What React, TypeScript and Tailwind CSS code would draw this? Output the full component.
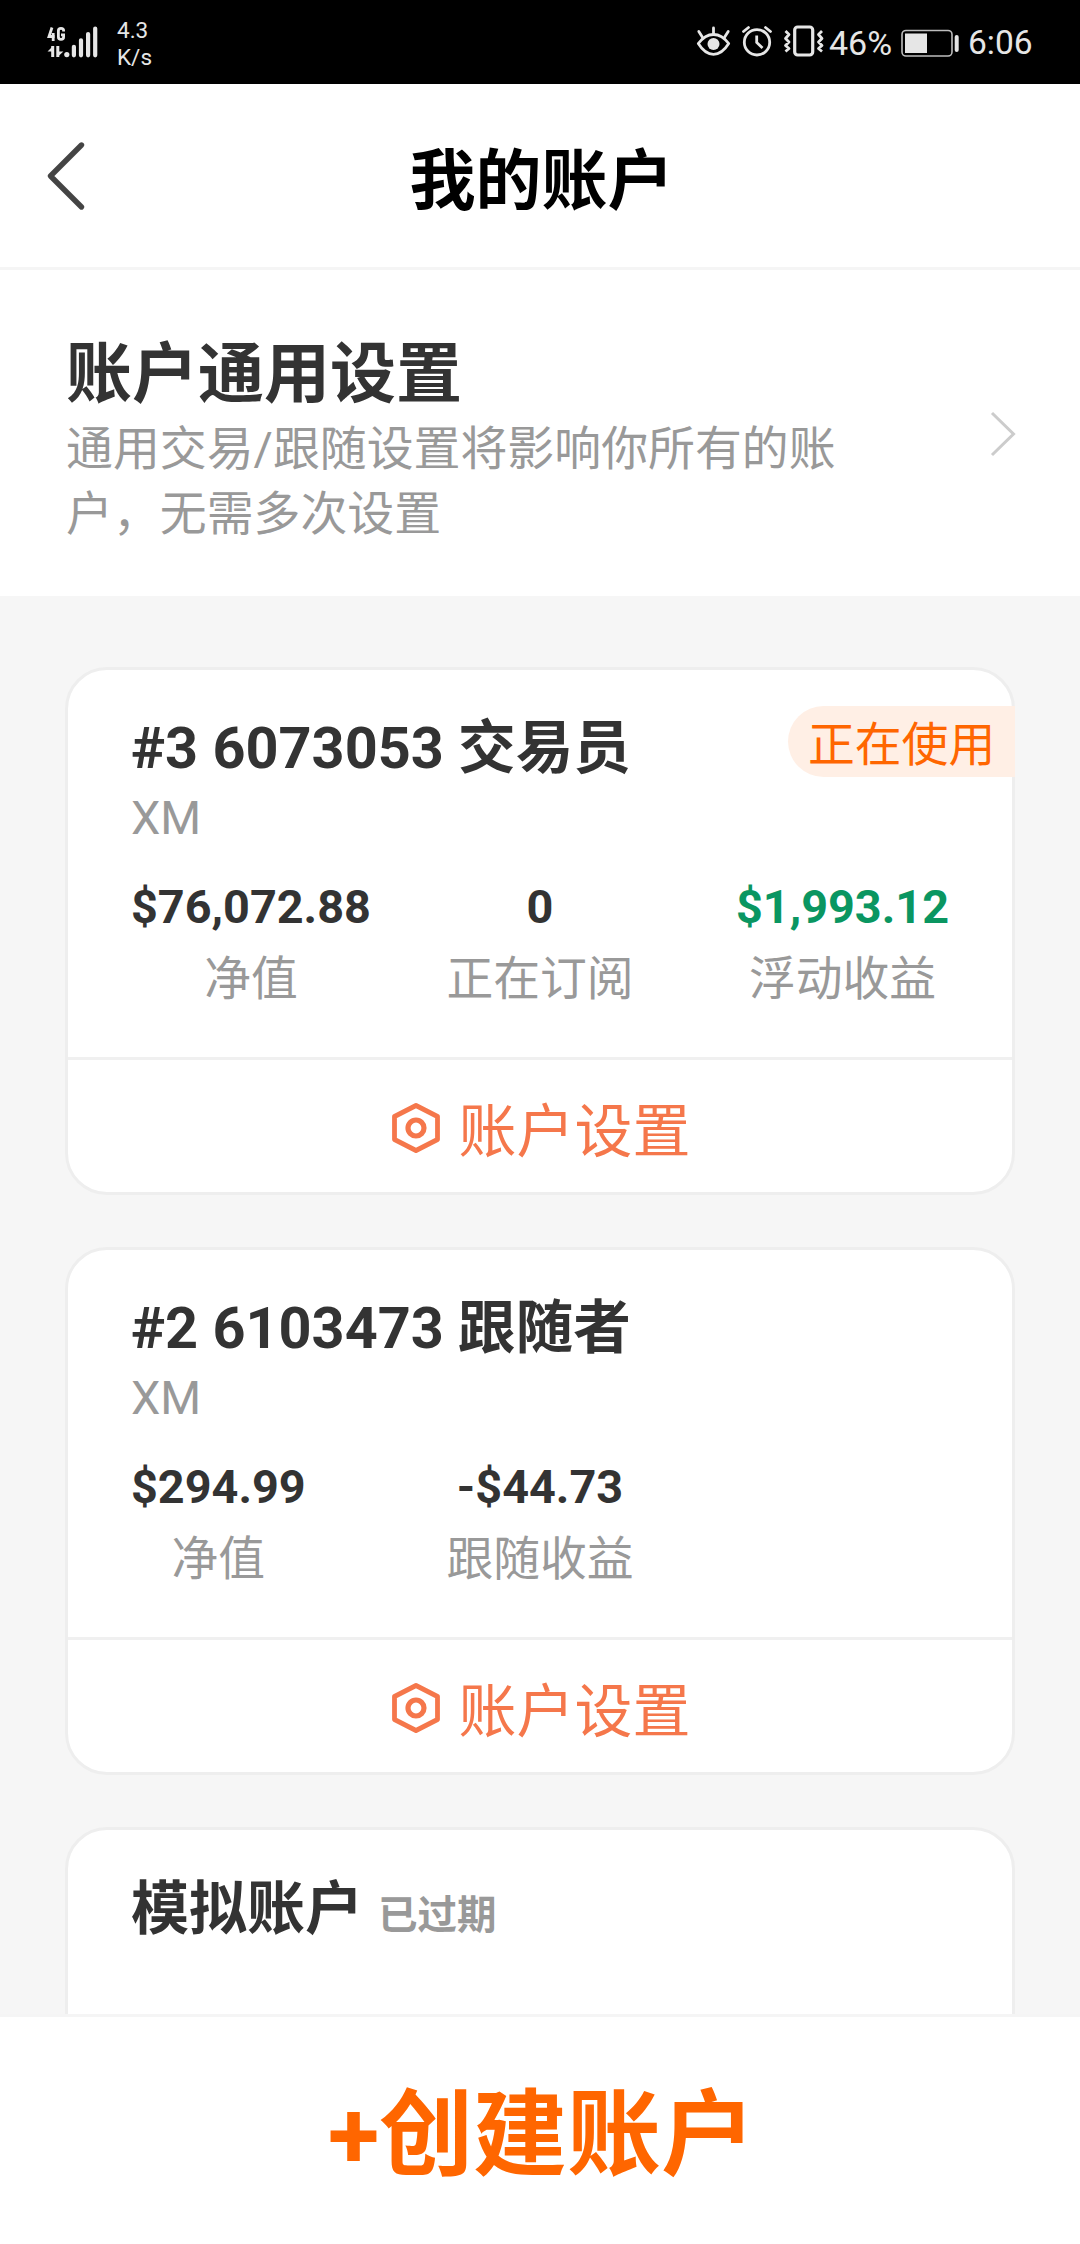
import React from "react";

type Stat = { value: string; label: string; color?: string };

function StatusBar() {
  return (
    <div className="flex h-[84px] shrink-0 items-center bg-black text-[#e6e6e6]">
      <svg className="ml-[46px] shrink-0" width="54" height="34" viewBox="46 25 54 34" fill="none" stroke="#e6e6e6">
        <path d="M52 27.5 L49 36.5 H54.8 M53.2 33 V41" strokeWidth="2.8" />
        <path d="M63.6 31.5 V30.5 Q63.6 28.4 61 28.4 Q58.4 28.4 58.4 30.5 V37 Q58.4 39.4 61 39.4 Q63.6 39.4 63.6 37 V34.8 H61" strokeWidth="2.8" />
        <path d="M52.7 57 V46 M57.8 46 V57" strokeWidth="3" />
        <path d="M47.5 51.5 L53 46 V51.5 Z M57.5 51.5 H63.4 L57.5 57 Z" fill="#e6e6e6" stroke="none" />
        <circle cx="66.8" cy="54.6" r="2.6" fill="#e6e6e6" stroke="none" />
        <path d="M73.9 46.8 V55.3 M81 40.3 V55.3 M88.1 34 V55.3 M95.2 28.5 V55.3" strokeWidth="4.2" strokeLinecap="round" />
      </svg>
      <div className="ml-[17px] pt-[3px] text-[22.5px] leading-[27px]">
        <div>4.3</div>
        <div>K/s</div>
      </div>
      <div className="ml-auto flex items-center pt-px">
        <svg className="-mt-px" width="128" height="34" viewBox="696 26 128 34" fill="none" stroke="#e6e6e6">
          <path d="M698.3 44.5 Q705 35.5 713.5 35.5 Q722 35.5 728.7 44.5 Q722 55.3 713.5 55.3 Q705 55.3 698.3 44.5 Z" strokeWidth="2.8" strokeLinejoin="round" />
          <circle cx="713.5" cy="45" r="6" fill="#e6e6e6" stroke="none" />
          <path d="M713.5 29 V35 M698.8 32.5 L702.3 38 M728.2 32.5 L724.7 38" strokeWidth="2.8" strokeLinecap="round" />
          <circle cx="757" cy="43.3" r="12.7" strokeWidth="2.8" />
          <path d="M743.5 32.5 L748.5 28.5 M770.5 32.5 L765.5 28.5" strokeWidth="2.8" strokeLinecap="round" />
          <path d="M756.7 36.5 V43.5 L762.5 49" strokeWidth="2.8" />
          <rect x="794.7" y="28" width="18" height="28" rx="3" strokeWidth="3.2" />
          <path d="M785.5 32 L789 35.5 L785.5 39.5 L789 43 L785.5 46.5 L789 49.5 L785.5 52.5 M822 32 L818.5 35.5 L822 39.5 L818.5 43 L822 46.5 L818.5 49.5 L822 52.5" strokeWidth="2.8" strokeLinejoin="round" />
        </svg>
        <span className="ml-[5px] w-[62px] text-[34px] leading-[40px]">46%</span>
        <svg className="ml-[10px]" width="60" height="28" viewBox="901 28 60 28">
          <rect x="902" y="29.5" width="50" height="25.5" rx="4" fill="none" stroke="#bdbdbd" strokeWidth="1.6" />
          <rect x="905" y="32.5" width="22" height="19.5" fill="#e6e6e6" />
          <rect x="954.7" y="34" width="4" height="17" rx="2" fill="#e6e6e6" />
        </svg>
        <span className="mr-[46px] ml-[7px] w-[66px] text-[33.5px] leading-[40px]">6:06</span>
      </div>
    </div>
  );
}

function SettingsButton() {
  return (
    <div className="flex h-[135px] items-center justify-center border-t-[3px] border-[#f0f0f0] pl-[2px] text-[#f5774b]">
      <svg className="mt-[4px] mr-[17px]" width="50" height="52" viewBox="0 0 50 52" fill="none" stroke="#f5774b">
        <path d="M25 3.5 L46.5 14.5 V37.5 L25 48.5 L3.5 37.5 V14.5 Z" strokeWidth="4.8" strokeLinejoin="round" />
        <circle cx="25" cy="26" r="8" strokeWidth="5.2" />
      </svg>
      <span className="h-[76px] pt-[9px] text-[58px] leading-[70px]">账户设置</span>
    </div>
  );
}

function AccountCard({ title, broker, stats, active }: { title: string; broker: string; stats: Stat[]; active?: boolean }) {
  return (
    <div className="relative h-[528px] shrink-0 rounded-[42px] border-[3px] border-[#eee] bg-white">
      {active && (
        <div className="absolute top-[36px] -right-[3px] h-[71px] w-[227px] rounded-l-full bg-[#ffefe5] pt-[9px] pl-[20px] text-[46.8px] leading-[60px] whitespace-nowrap text-[#ff6600]">
          正在使用
        </div>
      )}
      <div className="flex h-[387px] flex-col px-[63px] pt-[43px]">
        <div className="h-[72px] text-[57.6px] leading-[72px] font-bold">{title}</div>
        <div className="mt-[3px] h-[60px] text-[46.8px] leading-[60px] text-[#999]">{broker}</div>
        <div className="mt-[29px] grid grid-cols-3">
          {stats.map((s, i) => (
            <div key={s.label} className={i === 0 ? "justify-self-start" : i === 1 ? "justify-self-center" : "justify-self-end"}>
              <div className={"h-[60px] text-center text-[46.8px] leading-[60px] font-bold " + (s.color ?? "")}>{s.value}</div>
              <div className="mt-[12px] h-[60px] text-center text-[46.8px] leading-[60px] whitespace-nowrap text-[#999]">{s.label}</div>
            </div>
          ))}
        </div>
      </div>
      <SettingsButton />
    </div>
  );
}

export default function App() {
  return (
    <div className="flex h-[2244px] w-[1080px] flex-col overflow-hidden bg-white font-['Roboto','Noto_Sans_CJK_SC',sans-serif] text-[#333]">
      <StatusBar />
      <header className="grid h-[186px] shrink-0 grid-cols-3 items-center border-b-[3px] border-[#f5f5f5]">
        <svg className="ml-[46px]" width="42" height="70" viewBox="0 0 42 70" fill="none" stroke="#444" strokeWidth="5.4" strokeLinecap="round">
          <path d="M35.5 4 L4.5 35 L35.5 66" strokeLinejoin="round" />
        </svg>
        <h1 className="h-[84px] pt-[10px] pl-[3px] text-center text-[66px] leading-[76px] font-bold whitespace-nowrap text-black">我的账户</h1>
      </header>
      <section className="flex h-[326px] shrink-0 items-start pr-[63px] pl-[66px]">
        <div className="w-[800px] pt-[66px]">
          <h2 className="h-[80px] text-[66px] leading-[78px] font-bold">账户通用设置</h2>
          <p className="text-[46.9px] leading-[65px] text-[#999]">通用交易/跟随设置将影响你所有的账户，无需多次设置</p>
        </div>
        <svg className="mt-[140px] ml-auto" width="28" height="48" viewBox="0 0 28 48" fill="none" stroke="#ccc" strokeWidth="3">
          <path d="M3 3 L24.5 24 L3 45" />
        </svg>
      </section>
      <main className="flex min-h-0 flex-1 flex-col gap-[52px] overflow-hidden bg-[#f6f6f6] px-[65px] pt-[71px]">
        <AccountCard
          active
          title="#3 6073053 交易员"
          broker="XM"
          stats={[
            { value: "$76,072.88", label: "净值" },
            { value: "0", label: "正在订阅" },
            { value: "$1,993.12", label: "浮动收益", color: "text-[#0a9661]" },
          ]}
        />
        <AccountCard
          title="#2 6103473 跟随者"
          broker="XM"
          stats={[
            { value: "$294.99", label: "净值" },
            { value: "-$44.73", label: "跟随收益" },
          ]}
        />
        <div className="h-[528px] shrink-0 rounded-[42px] border-[3px] border-[#eee] bg-white px-[63px] pt-[44px] font-bold">
          <span className="text-[58px] leading-[70px]">模拟账户</span>
          <span className="ml-[15px] text-[39.5px] leading-[60px] text-[#999]">已过期</span>
        </div>
      </main>
      <footer className="h-[230px] shrink-0 border-t-[3px] border-[#f5f5f5] bg-white pt-[64px] pl-[3px] text-center text-[94px] leading-[110px] font-bold text-[#ff6600]">
        +创建账户
      </footer>
    </div>
  );
}
